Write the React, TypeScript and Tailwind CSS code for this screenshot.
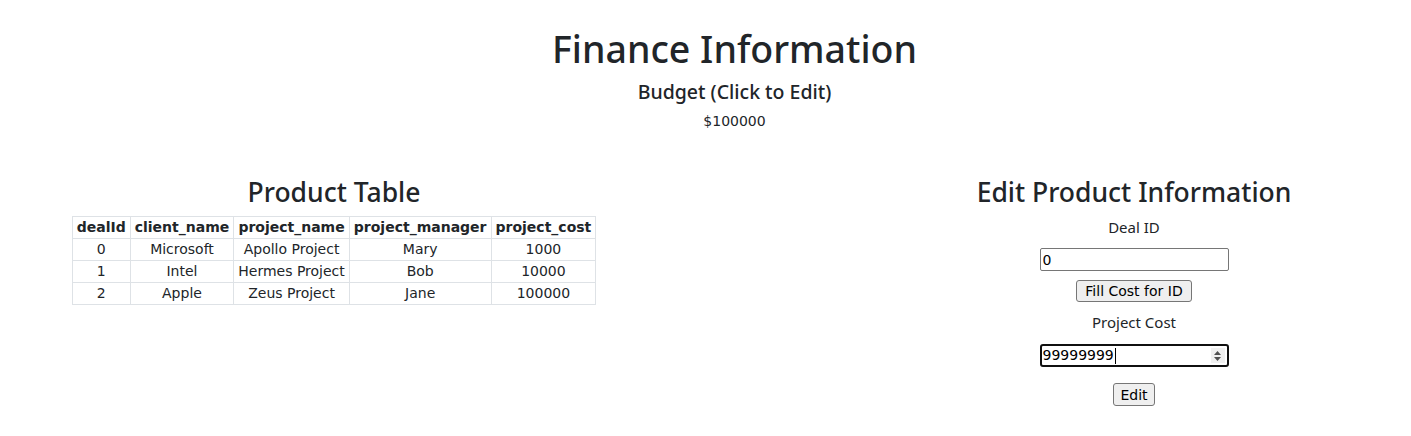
import React from 'react';

const rows = [
  { dealId: 0, client: 'Microsoft', project: 'Apollo Project', manager: 'Mary', cost: 1000 },
  { dealId: 1, client: 'Intel', project: 'Hermes Project', manager: 'Bob', cost: 10000 },
  { dealId: 2, client: 'Apple', project: 'Zeus Project', manager: 'Jane', cost: 100000 },
];

const heading = "font-['Noto_Sans','Open_Sans',sans-serif]";
const body = "font-['DejaVu_Sans','Verdana',sans-serif]";

const App: React.FC = () => {
  return (
    <div className="w-[1411px] min-h-[436px] overflow-hidden bg-white text-[#212529]">
      {/* page header */}
      <header className="pl-[58px] pt-[25px] text-center">
        <h1 className={`${heading} text-[37.5px] leading-[48px] font-medium`}>Finance Information</h1>
        <h5 className={`${heading} mt-[7px] text-[19.5px] leading-[24px] font-medium`}>Budget (Click to Edit)</h5>
        <p className={`${body} mt-[7px] text-[14px] leading-[20px]`}>$100000</p>
      </header>

      <div className="mt-[44px] flex">
        {/* product table */}
        <section className="flex w-[668px] flex-col items-center">
          <h3 className={`${heading} text-[26.5px] leading-[34px] font-medium`}>Product Table</h3>
          <table className={`${body} mt-[7px] border-collapse text-center text-[14px] leading-[17px]`}>
            <thead>
              <tr>
                {['dealId', 'client_name', 'project_name', 'project_manager', 'project_cost'].map((h) => (
                  <th key={h} className="border border-[#dee2e6] px-[4px] py-[2px] font-bold whitespace-nowrap">
                    {h}
                  </th>
                ))}
              </tr>
            </thead>
            <tbody>
              {rows.map((r) => (
                <tr key={r.dealId}>
                  <td className="border border-[#dee2e6] px-[4px] py-[2px]">{r.dealId}</td>
                  <td className="border border-[#dee2e6] px-[4px] py-[2px]">{r.client}</td>
                  <td className="border border-[#dee2e6] px-[4px] py-[2px] whitespace-nowrap">{r.project}</td>
                  <td className="border border-[#dee2e6] px-[4px] py-[2px]">{r.manager}</td>
                  <td className="border border-[#dee2e6] px-[4px] py-[2px]">{r.cost}</td>
                </tr>
              ))}
            </tbody>
          </table>
        </section>

        {/* edit form */}
        <section className="ml-[200px] flex w-[532px] flex-col items-center">
          <h3 className={`${heading} text-[26.5px] leading-[34px] font-medium`}>Edit Product Information</h3>
          <label className={`${heading} mt-[6px] text-[15px] leading-[24px]`}>Deal ID</label>
          <input
            type="text"
            defaultValue="0"
            className={`${body} mt-[9px] h-[23px] w-[189px] rounded-[2px] border border-[#767676] bg-white px-[2px] text-[14px] text-black`}
          />
          <button
            type="button"
            className={`${body} mt-[9px] h-[22px] rounded-[3px] border border-[#767676] bg-[#efefef] px-[8px] text-[14px] leading-[20px] text-black`}
          >
            Fill Cost for ID
          </button>
          <label className={`${heading} mt-[8px] text-[15px] leading-[24px]`}>Project Cost</label>
          <div
            className={`${body} mt-[10px] flex h-[23px] w-[189px] items-center rounded-[3px] border-2 border-[#101010] bg-white pl-[1px] pr-[2px] text-[14px] text-black`}
          >
            <span>99999999</span>
            <span className="ml-[1px] h-[16px] w-px bg-black" />
            <span className="ml-auto flex h-[15px] w-[14px] flex-col items-center justify-center gap-[2px] bg-[#f0f0f0]">
              <svg width="7" height="4" viewBox="0 0 7 4">
                <path d="M0 4 L3.5 0 L7 4 Z" fill="#505050" />
              </svg>
              <svg width="7" height="4" viewBox="0 0 7 4">
                <path d="M0 0 L3.5 4 L7 0 Z" fill="#505050" />
              </svg>
            </span>
          </div>
          <button
            type="button"
            className={`${body} mt-[16px] h-[23px] rounded-[3px] border border-[#767676] bg-[#efefef] px-[6px] text-[14px] leading-[20px] text-black`}
          >
            Edit
          </button>
        </section>
      </div>
    </div>
  );
};

export default App;
